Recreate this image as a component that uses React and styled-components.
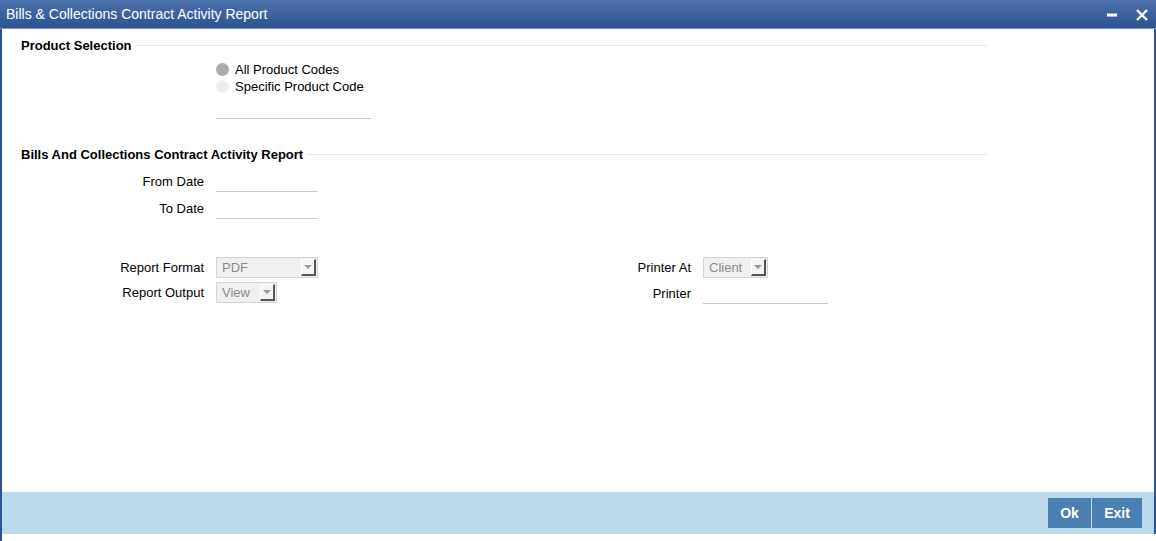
import styled, { createGlobalStyle } from 'styled-components'

const Global = createGlobalStyle`
    html, body { margin: 0; padding: 0; background: #fff; }
    body { font-family: "Liberation Sans", Arial, sans-serif; font-size: 13px; color: #000; }
`

const Window = styled.div`
    width: 1156px;
    height: 541px;
    display: flex;
    flex-direction: column;
    box-sizing: border-box;
    background: #fff;
`

const TitleBar = styled.div`
    height: 28px;
    flex: none;
    display: flex;
    align-items: center;
    justify-content: space-between;
    padding: 0 8px 0 6px;
    background: linear-gradient(#4c72ad, #3a5f9c 60%, #2f5290);
    border-bottom: 1px solid #7c96bd;
    color: #fff;
    font-size: 14px;
`

const TitleIcons = styled.div`
    display: flex;
    align-items: center;
    gap: 19px;
    margin-top: 2px;
`

const Body = styled.div`
    flex: 1;
    display: flex;
    flex-direction: column;
    border-left: 2px solid #2f5290;
    border-right: 2px solid #2f5290;
`

const Content = styled.div`
    flex: 1;
    padding: 7px 0 0 19px;
`

const SectionHead = styled.div`
    display: flex;
    align-items: center;
    width: 966px;
    font-weight: bold;
    font-size: 13px;
    height: 18px;
    &::after {
        content: '';
        flex: 1;
        height: 1px;
        background: #e8e8e8;
        margin-left: 3px;
    }
`

const RadioGroup = styled.div`
    margin: 8px 0 0 195px;
    display: flex;
    flex-direction: column;
    gap: 3px;
`

const RadioRow = styled.label`
    display: flex;
    align-items: center;
    gap: 6px;
    height: 14px;
    font-size: 13px;
`

const Dot = styled.span`
    width: 13px;
    height: 13px;
    border-radius: 50%;
    background: ${p => (p.checked ? '#aaaaaa' : '#eeeeee')};
`

const Underline = styled.div`
    width: ${p => p.w}px;
    height: 1px;
    background: #c8c8c8;
    margin: ${p => p.mt || 0}px 0 0 195px;
`

const Grid = styled.div`
    display: grid;
    grid-template-columns: 183px ${p => p.w}px;
    column-gap: 12px;
    row-gap: ${p => p.gap}px;
    align-items: center;
    margin-top: ${p => p.mt || 0}px;
`

const Label = styled.div`
    text-align: right;
    white-space: nowrap;
`

const LineInput = styled.div`
    height: ${p => p.h || 20}px;
    width: ${p => p.w}px;
    border-bottom: 1px solid #c8c8c8;
`

const Select = styled.div`
    width: ${p => p.w}px;
    height: 21px;
    box-sizing: border-box;
    border: 1px solid #d4d4d4;
    background: #f0f0f0;
    display: flex;
    align-items: center;
    justify-content: space-between;
    padding-left: 5px;
    color: #8a8a8a;
`

const Arrow = styled.span`
    width: 15px;
    height: 17px;
    margin-right: 1px;
    box-sizing: border-box;
    background: #f4f4f4;
    border-right: 2px solid #555;
    border-bottom: 2px solid #555;
    border-top: 1px solid #fff;
    border-left: 1px solid #fff;
    display: flex;
    align-items: center;
    justify-content: center;
    &::before {
        content: '';
        border-left: 4px solid transparent;
        border-right: 4px solid transparent;
        border-top: 4px solid #9a9a9a;
    }
`

const Columns = styled.div`
    display: flex;
    margin-top: 38px;
`

const Column = styled.div`
    width: ${p => p.w}px;
`

const Spacer = styled.div`
    height: ${p => p.h}px;
`

const Footer = styled.div`
    height: 42px;
    flex: none;
    background: #bdd9ec;
    display: flex;
    align-items: center;
    justify-content: flex-end;
    padding-right: 12px;
    gap: 1px;
`

const Button = styled.button`
    height: 30px;
    min-width: ${p => p.w}px;
    border: none;
    background: #4a80b2;
    color: #fff;
    font-family: inherit;
    font-size: 14px;
    font-weight: bold;
    padding: 0;
`

const BottomGap = styled.div`
    height: 7px;
    flex: none;
    border-left: 2px solid #2f5290;
    border-right: 2px solid #fff;
`

function App(){
    return (
        <Window>
            <Global />
            <TitleBar>
                <span>Bills &amp; Collections Contract Activity Report</span>
                <TitleIcons>
                    <svg width="10" height="4" viewBox="0 0 10 4"><rect width="10" height="3" y="0.5" fill="#fff" /></svg>
                    <svg width="12" height="12" viewBox="0 0 12 12"><path d="M1 1 L11 11 M11 1 L1 11" stroke="#fff" strokeWidth="2.4" /></svg>
                </TitleIcons>
            </TitleBar>
            <Body>
                <Content>
                    <SectionHead>Product Selection</SectionHead>
                    <RadioGroup>
                        <RadioRow><Dot checked />All Product Codes</RadioRow>
                        <RadioRow><Dot />Specific Product Code</RadioRow>
                    </RadioGroup>
                    <Underline w={155} mt={25} />

                    <Spacer h={26} />
                    <SectionHead>Bills And Collections Contract Activity Report</SectionHead>
                    <Grid w={101} gap={6} mt={8}>
                        <Label>From Date</Label><LineInput w={101} />
                        <Label>To Date</Label><LineInput w={101} />
                    </Grid>

                    <Columns>
                        <Column w={487}>
                            <Grid w={102} gap={4}>
                                <Label>Report Format</Label>
                                <Select w={102}>PDF<Arrow /></Select>
                                <Label>Report Output</Label>
                                <Select w={61}>View<Arrow /></Select>
                            </Grid>
                        </Column>
                        <Column w={400}>
                            <Grid w={125} gap={4}>
                                <Label>Printer At</Label>
                                <Select w={65}>Client<Arrow /></Select>
                                <Label>Printer</Label>
                                <LineInput w={125} h={21} />
                            </Grid>
                        </Column>
                    </Columns>
                </Content>
                <Footer>
                    <Button w={43}>Ok</Button>
                    <Button w={50}>Exit</Button>
                </Footer>
            </Body>
            <BottomGap />
        </Window>
    )
}

export default App
